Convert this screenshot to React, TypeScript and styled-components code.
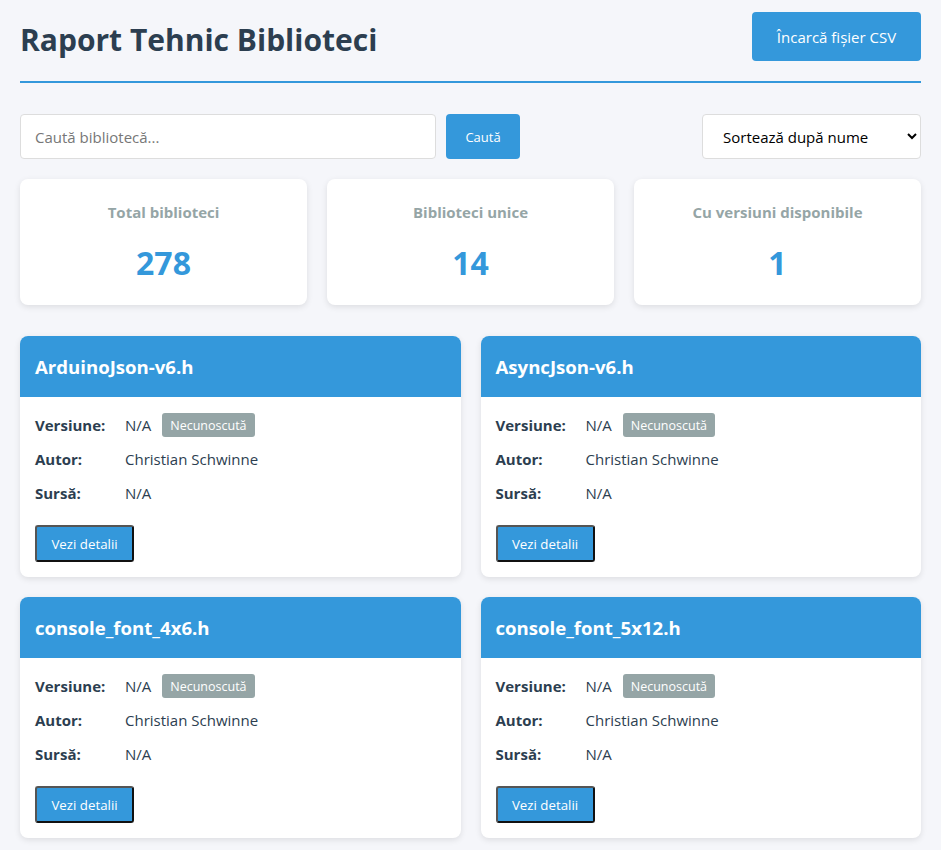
import React from "react";
import styled, { createGlobalStyle } from "styled-components";

const FONT = `"Open Sans", "Noto Sans", "Liberation Sans", sans-serif`;

const Global = createGlobalStyle`
  * { box-sizing: border-box; }
  html, body { margin: 0; padding: 0; background: #f5f6fa; }
  body { font-family: ${FONT}; color: #2c3e50; overflow: hidden; }
`;

const Page = styled.div`
  padding: 12px 20px 0 20px;
  height: 850px;
`;

const Header = styled.header`
  display: flex;
  align-items: flex-start;
  justify-content: space-between;
  padding-bottom: 20px;
  border-bottom: 2px solid #3498db;
`;

const Title = styled.h1`
  margin: 0;
  font-size: 30px;
  font-weight: 700;
  color: #2c3e50;
  line-height: 43px;
  padding-top: 6px;
`;

const PrimaryButton = styled.button`
  font-family: ${FONT};
  background: #3498db;
  color: #fff;
  border: none;
  border-radius: 4px;
  cursor: pointer;
`;

const UploadButton = styled(PrimaryButton)`
  width: 169px;
  height: 49px;
  font-size: 15px;
`;

const Controls = styled.div`
  display: flex;
  align-items: center;
  margin-top: 31px;
  gap: 10px;
`;

const SearchInput = styled.input`
  width: 416px;
  height: 45px;
  border: 1px solid #ddd;
  border-radius: 4px;
  padding: 0 14px;
  font-family: ${FONT};
  font-size: 15px;
  color: #2c3e50;
  background: #fff;
  outline: none;
  &::placeholder { color: #777; }
`;

const SearchButton = styled(PrimaryButton)`
  width: 74px;
  height: 45px;
  font-size: 13px;
`;

const SortSelect = styled.select`
  margin-left: auto;
  width: 219px;
  height: 45px;
  border: 1px solid #ddd;
  border-radius: 4px;
  padding: 0 6px 0 16px;
  font-family: ${FONT};
  font-size: 15px;
  color: #000;
  background: #fff;
`;

const StatsGrid = styled.div`
  display: grid;
  grid-template-columns: repeat(3, 1fr);
  gap: 20px;
  margin-top: 20px;
`;

const StatCard = styled.div`
  background: #fff;
  border-radius: 8px;
  box-shadow: 0 2px 6px rgba(0, 0, 0, 0.1);
  height: 126px;
  display: flex;
  flex-direction: column;
  align-items: center;
  padding-top: 21px;
`;

const StatLabel = styled.div`
  font-size: 15px;
  font-weight: 700;
  color: #95a5a6;
  line-height: 24px;
`;

const StatValue = styled.div`
  margin-top: 17px;
  font-size: 32px;
  font-weight: 700;
  color: #3498db;
  line-height: 44px;
`;

const LibGrid = styled.div`
  display: grid;
  grid-template-columns: repeat(2, 1fr);
  gap: 20px;
  margin-top: 31px;
`;

const LibCard = styled.div`
  background: #fff;
  border-radius: 8px;
  box-shadow: 0 2px 6px rgba(0, 0, 0, 0.1);
  overflow: hidden;
  height: 241px;
`;

const LibHeader = styled.div`
  background: #3498db;
  height: 61px;
  display: flex;
  align-items: center;
  padding: 0 15px;
`;

const LibTitle = styled.h3`
  margin: 0;
  color: #fff;
  font-size: 18.6px;
  font-weight: 700;
`;

const LibBody = styled.div`
  padding: 16px 15px 15px;
`;

const Row = styled.div`
  display: flex;
  align-items: center;
  height: 24px;
  margin-bottom: 10px;
  font-size: 15px;
`;

const Label = styled.span`
  width: 90px;
  font-weight: 700;
  color: #2c3e50;
`;

const Value = styled.span`
  color: #2c3e50;
`;

const Badge = styled.span`
  margin-left: 11px;
  background: #95a5a6;
  color: #fff;
  border-radius: 3px;
  height: 24px;
  padding: 0 8px;
  display: inline-flex;
  align-items: center;
  font-size: 12.5px;
`;

const DetailsButton = styled.button`
  margin-top: 10px;
  width: 99px;
  height: 37px;
  font-family: ${FONT};
  font-size: 13.3px;
  color: #fff;
  background: #3498db;
  border: 2px solid;
  border-color: #555 #111 #111 #555;
  border-radius: 3px;
  cursor: pointer;
`;

const libs = [
  "ArduinoJson-v6.h",
  "AsyncJson-v6.h",
  "console_font_4x6.h",
  "console_font_5x12.h",
];

export default function App() {
  return (
    <>
      <Global />
      <Page>
        <Header>
          <Title>Raport Tehnic Biblioteci</Title>
          <UploadButton>Încarcă fișier CSV</UploadButton>
        </Header>
        <Controls>
          <SearchInput placeholder="Caută bibliotecă..." />
          <SearchButton>Caută</SearchButton>
          <SortSelect defaultValue="name">
            <option value="name">Sortează după nume</option>
          </SortSelect>
        </Controls>
        <StatsGrid>
          <StatCard>
            <StatLabel>Total biblioteci</StatLabel>
            <StatValue>278</StatValue>
          </StatCard>
          <StatCard>
            <StatLabel>Biblioteci unice</StatLabel>
            <StatValue>14</StatValue>
          </StatCard>
          <StatCard>
            <StatLabel>Cu versiuni disponibile</StatLabel>
            <StatValue>1</StatValue>
          </StatCard>
        </StatsGrid>
        <LibGrid>
          {libs.map((name) => (
            <LibCard key={name}>
              <LibHeader>
                <LibTitle>{name}</LibTitle>
              </LibHeader>
              <LibBody>
                <Row>
                  <Label>Versiune:</Label>
                  <Value>N/A</Value>
                  <Badge>Necunoscută</Badge>
                </Row>
                <Row>
                  <Label>Autor:</Label>
                  <Value>Christian Schwinne</Value>
                </Row>
                <Row>
                  <Label>Sursă:</Label>
                  <Value>N/A</Value>
                </Row>
                <DetailsButton>Vezi detalii</DetailsButton>
              </LibBody>
            </LibCard>
          ))}
        </LibGrid>
      </Page>
    </>
  );
}
